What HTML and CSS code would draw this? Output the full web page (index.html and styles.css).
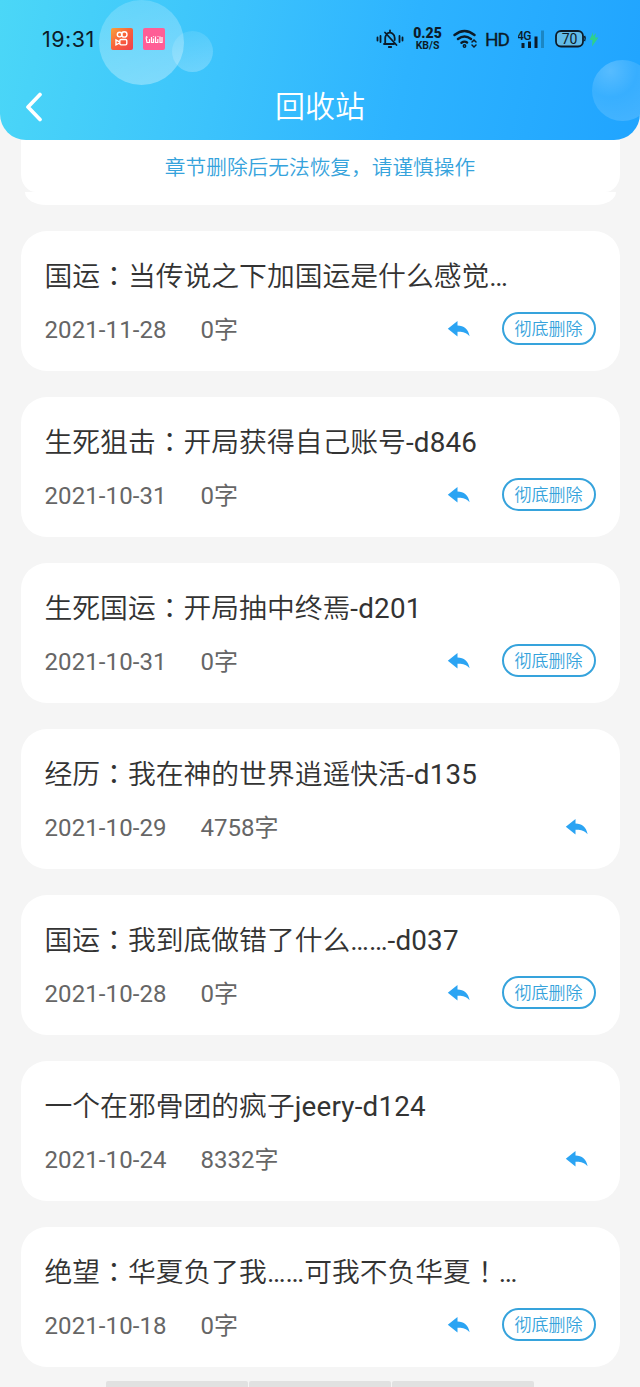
FILE: index.html
```
<!DOCTYPE html>
<html lang="zh-CN">
<head>
<meta charset="utf-8">
<title>回收站</title>
<link rel="stylesheet" href="styles.css">
</head>
<body>
<svg class="defs" width="0" height="0" aria-hidden="true">
  <symbol id="reply" viewBox="0 0 24 20"><path d="M.8 9.800 10.500 2V6.500C17 6.800 21.300 10 22.600 17.200 19 13.300 15.500 12.600 10.500 12.800V17.600Z" fill="#2ba4f3"/></symbol>
</svg>
<header class="header">
  <i class="bubble bubble-large"></i><i class="bubble bubble-small"></i><i class="bubble bubble-edge"></i>
  <div class="status">
    <span class="clock">19:31</span>
    <svg class="app-icon" width="22" height="22" viewBox="0 0 22 22"><defs><linearGradient id="o" x2="1" y2="1"><stop stop-color="#f7a23c"/><stop offset=".5" stop-color="#f9603a"/><stop offset="1" stop-color="#ef4050"/></linearGradient></defs><rect width="22" height="22" rx="2" fill="url(#o)"/><g fill="none" stroke="#fff" stroke-width="1.400"><circle cx="8.600" cy="6.600" r="2.300"/><circle cx="13.300" cy="6.400" r="2.700"/><rect x="8.800" y="11.500" width="7" height="5.400" rx="1.300"/><path d="M8.500 13.800 5 12v4.800l3.500-1.800"/></g></svg>
    <svg class="app-icon app-icon-pink" width="22" height="22" viewBox="0 0 22 22"><rect width="22" height="22" rx="2" fill="#ff5e96"/><path d="M3 9.500l1 5h2.500V11M8.500 9v5.500h2v-4M12.500 8.500v6h2.300V11M17 8.500v6h2V9M3 8.500l1.500 1M10.500 8v.8M15 8.300v.8" fill="none" stroke="#fff" stroke-width="1.200"/></svg>
    <div class="indicators">
      <svg class="bell" width="28" height="20" viewBox="0 0 28 20" fill="none" stroke="#0c1b28" stroke-width="1.800" stroke-linecap="round"><path d="M1.500 8.500v3M4.500 7v6M23.500 7v6M26.500 8.500v3M9 3.500l11.500 12.500M8 15h10M9.200 14V9c0-1 .2-1.800.7-2.600M11.500 4.300C15 2.300 18.700 5 18.700 9v2M14 1.500v1.500M12.800 18h2.400"/></svg>
      <div class="speed"><b>0.25</b><span>KB/S</span></div>
      <svg class="wifi" width="25" height="20" viewBox="0 0 25 20" fill="none" stroke="#0c1b28" stroke-width="2.400" stroke-linecap="round"><path d="M1.500 6Q11.500-2 21.500 6M5 10Q11.500 4.800 18 10M8.500 13.800Q11.500 11.600 14 13.500"/><circle cx="11.500" cy="17" r=".7"/><path d="M19 13l2-2 2 2M19 16l2 2 2-2" stroke-width="1.500"/></svg>
      <span class="hd">HD</span>
      <svg class="signal" width="27" height="20" viewBox="0 0 27 20"><text x="-1" y="10.500" class="signal-text">4G</text><g fill="#0c1b28"><rect x="3.500" y="14" width="3" height="5"/><rect x="10" y="12.500" width="3" height="6.500"/><rect x="16.500" y="7.500" width="3" height="11.500"/></g><rect x="23" y="1.500" width="3" height="17.500" fill="#1b86c4"/></svg>
      <svg class="battery" width="44" height="20" viewBox="0 0 44 20"><rect x="1" y="2" width="27" height="15.500" rx="5" fill="#62bbe8" stroke="#0c1b28" stroke-width="1.800"/><path d="M29.500 7q1.500 2.500 0 5" stroke="#0c1b28" stroke-width="1.500" fill="none"/><text x="14.500" y="14.500" text-anchor="middle" class="battery-text">70</text><path d="M38 3l-3.500 8h3L37 17.500l6.500-9h-3.500l1-4.500-3 3Z" fill="#2fd08c"/></svg>
    </div>
  </div>
  <div class="navbar">
    <svg class="back" width="18" height="32" viewBox="0 0 18 32"><path d="M16 3.500 4 16 16 28.500" fill="none" stroke="#fff" stroke-width="3.700" stroke-linecap="round" stroke-linejoin="round"/></svg>
    <h1 class="title">回收站</h1>
  </div>
</header>
<main class="list">
  <div class="notice"><p class="notice-text">章节删除后无法恢复，请谨慎操作</p></div>
  <article class="card"><h2 class="name">国运<span class="mid" lang="zh-TW">：</span>当传说之下加国运是什么感觉<span class="dots">…</span></h2><div class="row"><span class="date">2021-11-28</span><span class="count">0字</span><svg class="reply"><use href="#reply"/></svg><button class="delete">彻底删除</button></div></article>
  <article class="card"><h2 class="name">生死狙击<span class="mid" lang="zh-TW">：</span>开局获得自己账号<span class="latin">-d846</span></h2><div class="row"><span class="date">2021-10-31</span><span class="count">0字</span><svg class="reply"><use href="#reply"/></svg><button class="delete">彻底删除</button></div></article>
  <article class="card"><h2 class="name">生死国运<span class="mid" lang="zh-TW">：</span>开局抽中终焉<span class="latin">-d201</span></h2><div class="row"><span class="date">2021-10-31</span><span class="count">0字</span><svg class="reply"><use href="#reply"/></svg><button class="delete">彻底删除</button></div></article>
  <article class="card"><h2 class="name">经历<span class="mid" lang="zh-TW">：</span>我在神的世界逍遥快活<span class="latin">-d135</span></h2><div class="row"><span class="date">2021-10-29</span><span class="count">4758字</span><svg class="reply reply-end"><use href="#reply"/></svg></div></article>
  <article class="card"><h2 class="name">国运<span class="mid" lang="zh-TW">：</span>我到底做错了什么<span class="dots">……</span><span class="latin">-d037</span></h2><div class="row"><span class="date">2021-10-28</span><span class="count">0字</span><svg class="reply"><use href="#reply"/></svg><button class="delete">彻底删除</button></div></article>
  <article class="card"><h2 class="name">一个在邪骨团的疯子<span class="latin">jeery-d124</span></h2><div class="row"><span class="date">2021-10-24</span><span class="count">8332字</span><svg class="reply reply-end"><use href="#reply"/></svg></div></article>
  <article class="card"><h2 class="name">绝望<span class="mid" lang="zh-TW">：</span>华夏负了我<span class="dots">……</span>可我不负华夏<span class="mid" lang="zh-TW">！</span><span class="dots">…</span></h2><div class="row"><span class="date">2021-10-18</span><span class="count">0字</span><svg class="reply"><use href="#reply"/></svg><button class="delete">彻底删除</button></div></article>
</main>
<footer class="footer"><i class="segment"></i><i class="segment"></i><i class="segment"></i></footer>
</body>
</html>
```
FILE: styles.css
```
* { box-sizing: border-box; }
body {
  margin: 0;
  height: 1387px;
  overflow: hidden;
  background: #f5f5f5;
  font-family: Roboto, "Noto Sans CJK SC", sans-serif;
  color: #333;
}
.defs { position: absolute; }
.header {
  position: relative;
  height: 140px;
  overflow: hidden;
  border-radius: 0 0 26px 26px;
  background: linear-gradient(102deg, #4bd7f7 0%, #3cc3fc 35%, #2db3ff 63%, #20a4ff 100%);
}
.bubble { position: absolute; border-radius: 50%; }
.bubble-large { left: 99px; top: 0; width: 85px; height: 85px; background: linear-gradient(165deg, rgba(255,255,255,.16), rgba(255,255,255,.34)); }
.bubble-small { left: 172px; top: 31px; width: 41px; height: 41px; background: linear-gradient(345deg, rgba(255,255,255,.26), rgba(255,255,255,.08)); }
.bubble-edge { left: 592px; top: 60px; width: 61px; height: 61px; background: radial-gradient(circle at 30% 18%, rgba(255,255,255,.24), rgba(255,255,255,.1) 40%, rgba(255,255,255,.18)); }
.status { position: relative; display: flex; align-items: center; height: 78px; padding-left: 42px; }
.clock { width: 69px; font: 400 21.500px Inter, sans-serif; color: #0c1b28; white-space: nowrap; letter-spacing: .5px; }
.app-icon-pink { margin-left: 10px; }
.indicators { display: flex; align-items: center; margin-left: 211px; color: #0c1b28; }
.speed { display: flex; flex-direction: column; align-items: center; width: 29px; margin-left: 9px; font: 700 10.500px/12px Roboto, sans-serif; }
.speed b { font-size: 14px; line-height: 13px; }
.wifi { margin-left: 11px; }
.hd { width: 24px; margin-left: 7px; font-size: 19px; letter-spacing: -1px; -webkit-text-stroke: .3px #0c1b28; }
.signal { margin-left: 9px; }
.signal-text { font: 500 12px Roboto, sans-serif; fill: #0c1b28; letter-spacing: -.5px; }
.battery { margin-left: 10px; }
.battery-text { font: 400 14px Roboto, sans-serif; fill: #0c1b28; }
.navbar { position: relative; display: flex; align-items: center; height: 58px; padding: 0 24px; }
.title { flex: 1; margin: 0 18px 0 0; text-align: center; font-size: 30px; font-weight: 350; line-height: 58px; color: #fff; }
.list { display: flex; flex-direction: column; gap: 26px; padding: 0 20.500px; }
.notice { height: 65px; }
.notice::after { content: ""; display: block; height: 13px; margin: 0 4px; background: #fff; border-radius: 0 0 21px 21px / 0 0 13px 13px; }
.notice-text { margin: 0; height: 52px; padding-top: 12px; background: #fff; border-radius: 0 0 15px 15px / 0 0 18px 18px; text-align: center; font-size: 20.700px; line-height: 33px; color: #36a3dc; font-weight: 350; }
.card { height: 140px; padding: 24px 24px 0; border-radius: 26px; background: #fff; }
.name { margin: 0; height: 44px; font-size: 27.800px; line-height: 44px; font-weight: 350; white-space: nowrap; }
.mid { font-family: "Noto Sans CJK TC", sans-serif; line-height: 1; }
.latin { font-weight: 400; letter-spacing: .2px; }
.dots { font-weight: 400; }
.row { display: flex; align-items: center; height: 34px; margin-top: 14px; font-size: 24px; line-height: 34px; color: #666; }
.date { width: 156px; letter-spacing: .1px; }
.reply { width: 24px; height: 20px; margin: 0 0 2px auto; }
.reply-end { margin-right: 7px; }
.delete { width: 94px; height: 33px; margin: 0 0 3px 31px; padding: 0 0 2px; border: 2px solid #36a3dc; border-radius: 17px; background: #fff; color: #36a3dc; font: 350 17px/26px "Noto Sans CJK SC", sans-serif; white-space: nowrap; }
.footer { display: flex; gap: 1px; margin: 14px 106px 0; height: 6px; }
.segment { flex: 1; background: #e1e1e1; border-radius: 2px 2px 0 0; }
```
